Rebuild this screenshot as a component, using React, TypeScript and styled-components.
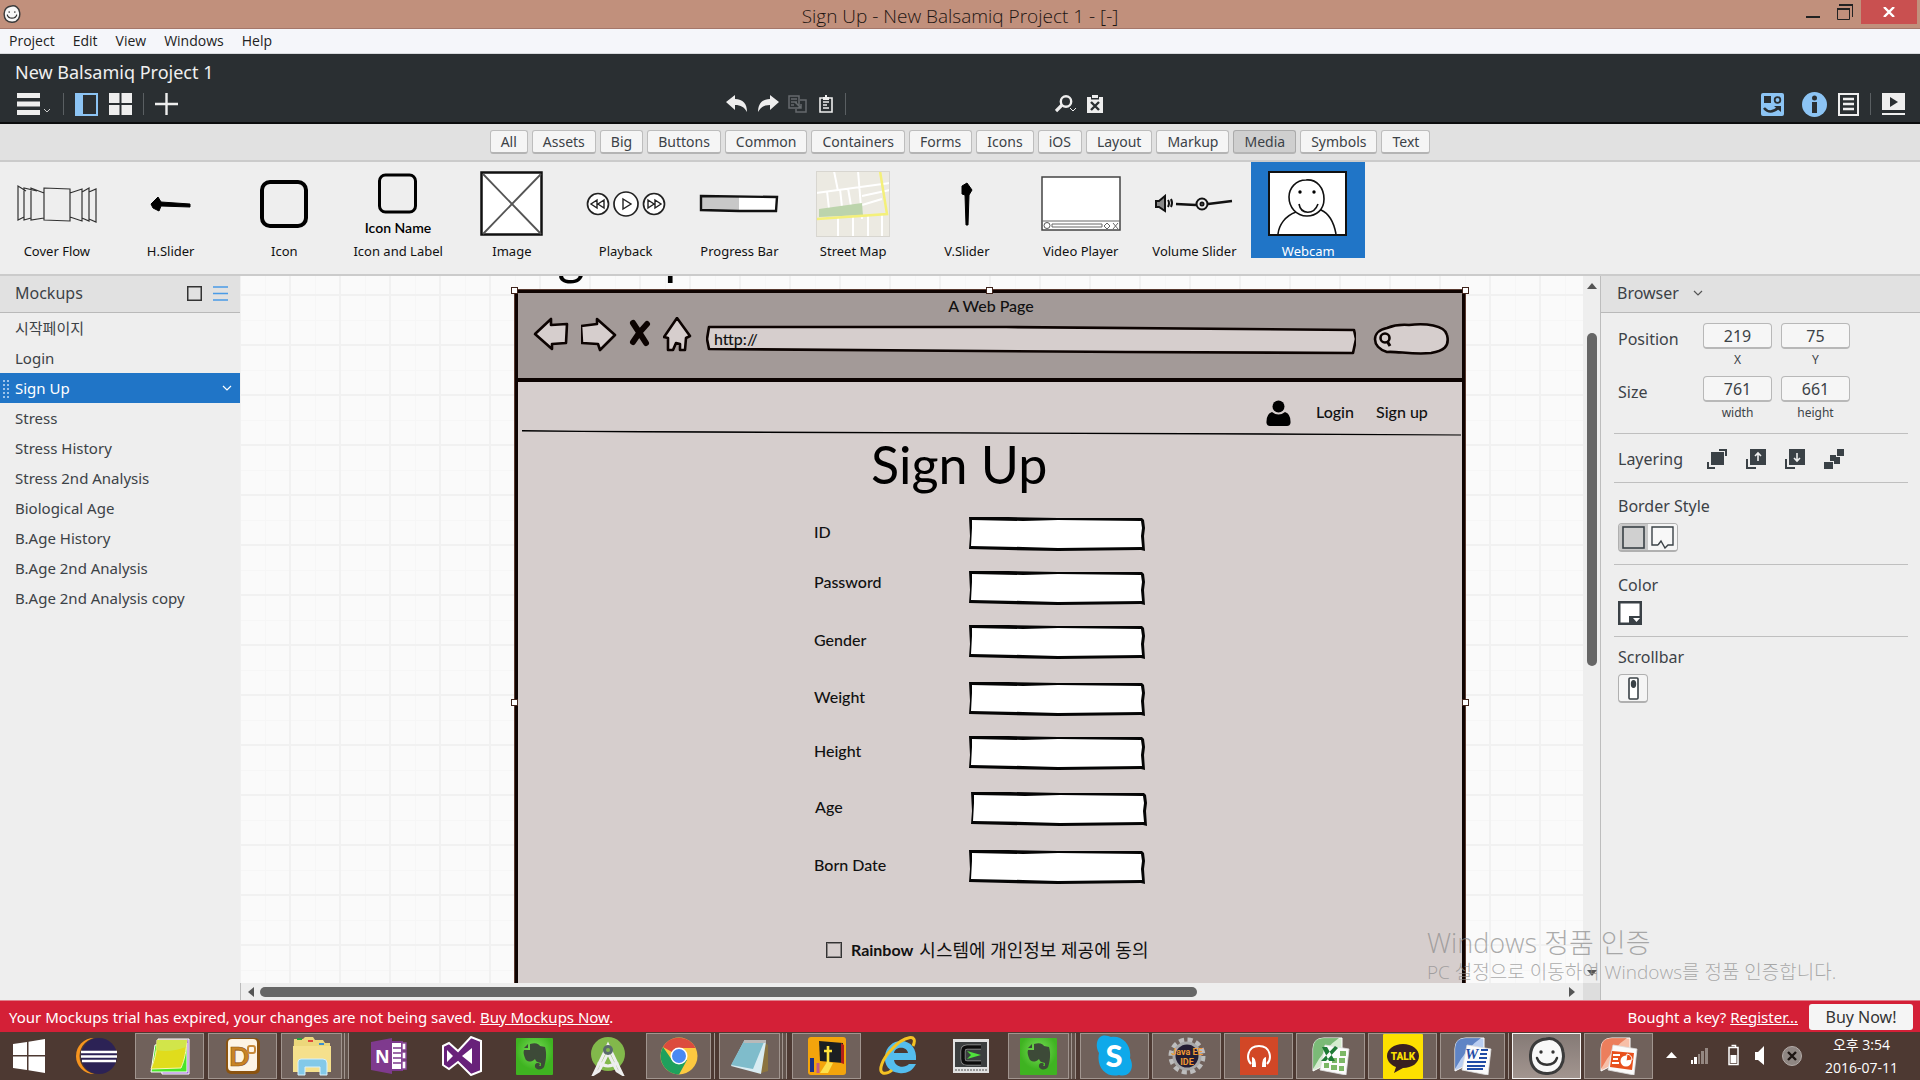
import React from "react";
import styled, { createGlobalStyle, css } from "styled-components";

const ui = `"Noto Sans", "Noto Sans CJK KR", sans-serif`;
const sketch = `Lato, "Noto Sans CJK KR", sans-serif`;
const system = `"Open Sans", "Noto Sans CJK KR", sans-serif`;

const Global = createGlobalStyle`
  * { box-sizing: border-box; }
  body { margin: 0; font-family: ${ui}; color: #3c4247; background: #eee; }
  button, input { font: inherit; color: inherit; margin: 0; padding: 0; border: 0; background: none; }
  svg { display: block; }
  a { color: inherit; }
  ul { list-style: none; margin: 0; padding: 0; }
  h1, h2, p { margin: 0; font-weight: 400; }
`;

const Shell = styled.div`
  display: flex;
  flex-direction: column;
  height: 100vh;
  overflow: hidden;
`;

/* ---------- window frame ---------- */
const TitleBar = styled.header`
  display: grid;
  grid-template-columns: 1fr auto 1fr;
  height: 29px;
  flex: none;
  background: #c1907c;
  border-bottom: 1px solid #a5776a;
`;
const AppMark = styled.div`
  padding: 5px 3px;
`;
const WindowTitle = styled.h1`
  font: 300 19px/32px ${system};
  color: #1d1512;
`;
const WindowButtons = styled.div`
  display: flex;
  justify-content: flex-end;
  align-items: flex-start;
  padding-right: 3px;
`;
const WindowButton = styled.button<{ $close?: boolean }>`
  display: flex;
  justify-content: center;
  align-items: center;
  width: ${(p) => (p.$close ? 56 : 32)}px;
  height: 24px;
  background: ${(p) => (p.$close ? "#c95050" : "transparent")};
`;
const MenuBar = styled.nav`
  display: flex;
  gap: 18px;
  flex: none;
  height: 25px;
  padding: 0 9px;
  background: #f5f6fa;
  border-bottom: 1px solid #d8dade;
`;
const MenuItem = styled.button`
  font: 14px/24px ${system};
  color: #222;
`;

/* ---------- dark toolbar ---------- */
const Header = styled.div`
  flex: none;
  height: 70px;
  padding-top: 6px;
  background: #2a2f32;
  border-bottom: 2px solid #0b0c0d;
`;
const ProjectName = styled.h2`
  padding-left: 15px;
  font-size: 18px;
  line-height: 24px;
  color: #f0f0f0;
`;
const Tools = styled.div`
  display: grid;
  grid-template-columns: 1fr 480px 1fr;
  height: 40px;
`;
const ToolGroup = styled.div<{ $end?: boolean; $gap?: number }>`
  display: flex;
  align-items: center;
  justify-content: ${(p) => (p.$end ? "flex-end" : "flex-start")};
  gap: ${(p) => p.$gap ?? 10}px;
`;
const ToolGroupLeft = styled(ToolGroup)`
  padding-left: 17px;
`;
const ToolGroupRight = styled(ToolGroup)`
  padding-right: 15px;
`;
const CenterTools = styled.div`
  display: flex;
  gap: 209px;
  padding-left: 6px;
`;
const ToolButton = styled.button`
  display: block;
`;
const Separator = styled.span`
  width: 1px;
  height: 22px;
  background: #5a5f62;
`;

/* ---------- component library ---------- */
const CategoryBar = styled.nav`
  display: flex;
  justify-content: center;
  align-items: center;
  gap: 4px;
  flex: none;
  height: 38px;
  background: #e1e1e1;
  border-bottom: 2px solid #cbcbcb;
`;
const Category = styled.button<{ $on?: boolean }>`
  height: 24px;
  padding: 0 10px;
  font-size: 14px;
  line-height: 20px;
  background: ${(p) => (p.$on ? "#cfcfcf" : "#f5f5f5")};
  border: 1px solid ${(p) => (p.$on ? "#aaa" : "#bdbdbd")};
  border-bottom: 2px solid #b4b4b4;
  border-radius: 3px;
`;
const Library = styled.section`
  flex: none;
  height: 114px;
  background: #eee;
  border-bottom: 2px solid #cbcbcb;
`;
const LibraryGrid = styled.div`
  display: grid;
  grid-template-columns: repeat(12, 1fr);
  width: 71.1%;
`;
const LibraryItem = styled.button<{ $on?: boolean }>`
  display: flex;
  flex-direction: column;
  align-items: center;
  height: 96px;
  font-size: 13px;
  line-height: 12px;
  color: ${(p) => (p.$on ? "#fff" : "#111")};
  background: ${(p) => (p.$on ? "#2075c7" : "transparent")};
`;
const Thumb = styled.span`
  display: flex;
  flex: none;
  align-items: center;
  justify-content: center;
  height: 83px;
`;

/* ---------- work area ---------- */
const Work = styled.main`
  display: grid;
  grid-template-columns: 240px 1fr 320px;
  flex: 1;
  min-height: 0;
`;
const Side = styled.aside`
  background: #eee;
  min-width: 0;
`;
const SideHead = styled.div`
  display: flex;
  align-items: center;
  height: 37px;
  padding: 0 12px 2px 15px;
  font-size: 16px;
  background: #e1e1e1;
  border-bottom: 1px solid #b9b9b9;
`;
const SideTitle = styled.h2`
  flex: 1;
  font-size: 16px;
  line-height: 24px;
`;
const ViewButton = styled.button`
  margin-left: 11px;
`;
const Row = styled.button<{ $on?: boolean }>`
  position: relative;
  display: flex;
  align-items: center;
  justify-content: space-between;
  width: 100%;
  height: 30px;
  padding: 0 8px 0 15px;
  font-size: 15px;
  line-height: 20px;
  text-align: left;
  color: ${(p) => (p.$on ? "#fff" : "#3c4247")};
  background: ${(p) => (p.$on ? "#2075c7" : "transparent")};
`;
const Grip = styled.span`
  position: absolute;
  left: 3px;
  top: 7px;
  width: 6px;
  height: 18px;
  background: radial-gradient(circle at 1px 1px, #9cc3ea 1px, transparent 1px) 0 0 / 4px 4px;
`;
const Stage = styled.div`
  display: grid;
  grid-template-columns: 1fr 17px;
  grid-template-rows: 1fr 17px;
  min-width: 0;
  min-height: 0;
`;
const VScroll = styled.div`
  display: flex;
  flex-direction: column;
  align-items: center;
  justify-content: space-between;
  padding: 7px 0;
  background: #eee;
`;
const VTrack = styled.div`
  flex: 1;
  padding: 44px 0 304px;
  display: flex;
`;
const HScroll = styled.div`
  display: flex;
  align-items: center;
  padding: 0 8px 0 7px;
  background: #eee;
  border-left: 1px solid #bbb;
`;
const HTrack = styled.div`
  flex: 1;
  padding: 0 28% 0 6px;
`;
const VThumb = styled.div`
  width: 10px;
  border-radius: 5px;
  background: #666;
`;
const HThumb = styled.div`
  height: 10px;
  border-radius: 5px;
  background: #666;
`;
const Corner = styled.div`
  background: #ddd;
`;

/* ---------- free canvas ---------- */
const Canvas = styled.div`
  position: relative;
  overflow: hidden;
  background-color: #fafafa;
  background-image: linear-gradient(#f1f1f1 2px, transparent 2px),
    linear-gradient(90deg, #f1f1f1 2px, transparent 2px), linear-gradient(#f6f6f6 1px, transparent 1px),
    linear-gradient(90deg, #f6f6f6 1px, transparent 1px);
  background-size: 50px 50px, 50px 50px, 50px 50px, 50px 50px;
  background-position: 0 18px, 49px 0, 0 44px, 25px 0;
`;
type Spot = { $x: number; $y: number };
const pin = css<Spot>`
  position: absolute;
  left: ${(p) => p.$x}px;
  top: ${(p) => p.$y}px;
`;
const BigLabel = styled.div<Spot>`
  ${pin}
  font: 400 52px/60px ${sketch};
  color: #000;
  white-space: nowrap;
`;
const Label = styled.label<Spot>`
  ${pin}
  font: 500 16px/20px ${sketch};
  color: #111;
  white-space: nowrap;
`;
const Browser = styled.section<Spot>`
  ${pin}
  width: 952px;
  height: 827px;
  background: #d6cecd;
  border: 4px solid #0f0402;
  outline: 1px solid #5a3a30;
  outline-offset: -1px;
`;
const BrowserHead = styled.div`
  height: 89px;
  padding: 2px 13px 0 15px;
  background: #a39a98;
  border-bottom: 4px solid #0c0301;
`;
const BrowserTitle = styled.p`
  font: 500 16px/22px ${sketch};
  text-align: center;
  color: #111;
`;
const BrowserTools = styled.div`
  display: flex;
  height: 40px;
  gap: 12px;
`;
const Address = styled.div`
  position: relative;
  flex: 1;
  margin: 0 5px 0 2px;
`;
const AddressInput = styled.input`
  position: absolute;
  left: 8px;
  top: 11px;
  width: 95%;
  height: 22px;
  font: 500 16px/22px ${sketch};
  color: #111;
`;
const SearchBox = styled.div`
  position: relative;
`;
const SearchInput = styled.input`
  position: absolute;
  left: 22px;
  top: 12px;
  width: 44px;
  height: 22px;
`;
const Rule = styled.svg<Spot>`
  ${pin}
`;
const Person = styled.svg<Spot>`
  ${pin}
`;
const CanvasLink = styled.a<Spot>`
  ${pin}
  font: 500 16px/20px ${sketch};
  color: #111;
  text-decoration: none;
  white-space: nowrap;
`;
const TextBox = styled.div<Spot>`
  ${pin}
  width: 178px;
  height: 36px;
`;
const TextBoxInput = styled.input`
  position: absolute;
  inset: 5px;
  width: 166px;
  font: 400 16px/22px ${sketch};
`;
const Consent = styled.label<Spot>`
  ${pin}
  display: flex;
  align-items: center;
  gap: 9px;
  font: 400 16px/20px ${sketch};
  color: #111;
  white-space: nowrap;
`;
const Check = styled.input`
  appearance: none;
  width: 16px;
  height: 16px;
  border: 1px solid #333;
  box-shadow: inset 0 0 0 1px #8a8584;
`;
const ConsentText = styled.span`
  display: flex;
  gap: 6px;
  font-size: 18px;
`;
const ConsentBrand = styled.b`
  font-size: 16px;
`;
const Handle = styled.span<Spot>`
  ${pin}
  width: 7px;
  height: 7px;
  background: #fff;
  border: 1px solid #40241c;
`;

/* ---------- inspector ---------- */
const Inspector = styled(Side)`
  border-left: 1px solid #bdbdbd;
`;
const InspectorHead = styled(SideHead)`
  gap: 14px;
  padding-left: 16px;
`;
const Section = styled.div<{ $pad: string }>`
  margin: 0 12px 0 13px;
  padding: ${(p) => p.$pad};
  font-size: 16px;
  line-height: 20px;
  border-bottom: 1px solid #bfbfbf;
  &:last-child { border-bottom: 0; }
`;
const Prop = styled.div`
  display: grid;
  grid-template-columns: 85px 156px;
  height: 53px;
`;
const PropName = styled.span`
  padding-top: 6px;
`;
const NumberField = styled.label`
  display: flex;
  flex-direction: column;
  align-items: center;
  width: 78px;
  padding-right: 9px;
  font-size: 12px;
  line-height: 22px;
`;
const Fields = styled.div`
  display: flex;
`;
const NumberInput = styled.input`
  width: 69px;
  height: 26px;
  text-align: center;
  font-size: 16px;
  line-height: 22px;
  background: #f6f6f6;
  border: 1px solid #b8b8b8;
  border-bottom-width: 2px;
  border-radius: 4px;
`;
const Layering = styled.div`
  display: flex;
  align-items: center;
  height: 20px;
`;
const LayerName = styled.span`
  width: 89px;
`;
const LayerIcons = styled.div`
  display: flex;
  gap: 19px;
`;
const Toggle = styled.div`
  display: flex;
  width: 60px;
  margin-top: 7px;
  border: 1px solid #b0b0b0;
  border-bottom-width: 2px;
  border-radius: 4px;
  overflow: hidden;
`;
const ToggleButton = styled.button<{ $on?: boolean }>`
  display: flex;
  align-items: center;
  justify-content: center;
  width: 29px;
  height: 26px;
  background: ${(p) => (p.$on ? "#c8c8c8" : "#f5f5f5")};
`;
const Swatch = styled.button`
  display: block;
  margin-top: 6px;
`;
const IconBox = styled.button`
  display: flex;
  align-items: center;
  justify-content: center;
  width: 30px;
  height: 29px;
  margin-top: 7px;
  background: #f5f5f5;
  border: 1px solid #b0b0b0;
  border-bottom-width: 2px;
  border-radius: 4px;
`;

/* ---------- trial notice ---------- */
const Notice = styled.div`
  display: flex;
  align-items: center;
  justify-content: space-between;
  flex: none;
  height: 32px;
  padding: 0 7px 0 9px;
  font-size: 15px;
  line-height: 20px;
  color: #fff;
  background: #d42037;
  border-top: 1px solid #e0808c;
`;
const NoticeEnd = styled.div`
  display: flex;
  align-items: center;
  gap: 11px;
`;
const BuyButton = styled.button`
  width: 104px;
  height: 26px;
  font-size: 16px;
  line-height: 24px;
  color: #333;
  background: #f5f5f5;
  border-radius: 3px;
`;

/* ---------- taskbar ---------- */
const TaskBar = styled.footer`
  display: flex;
  flex: none;
  height: 48px;
  background: #4d3932;
`;
const StartButton = styled.button`
  width: 58px;
  display: flex;
  justify-content: center;
  align-items: center;
`;
const Pinned = styled.button`
  width: 77px;
  display: flex;
  justify-content: center;
  align-items: center;
`;
const TaskGroup = styled.div<{ $gap: number }>`
  display: flex;
  gap: ${(p) => p.$gap}px;
  padding: 1px 3px 1px 0;
`;
const Task = styled.button<{ $state: string; $stack: number }>`
  display: flex;
  justify-content: center;
  align-items: center;
  width: ${(p) => 69 - p.$stack * 4}px;
  margin-right: ${(p) => p.$stack * 4}px;
  border: 1px solid transparent;
  ${(p) => p.$state === "open" && css`background: #70615b; border-color: #a1958f;`}
  ${(p) => p.$state === "active" && css`background: linear-gradient(#857a76, #a2958f); border-color: #f4f2f1;`}
  ${(p) => p.$stack === 1 && css`box-shadow: 3px 0 0 #4d3932, 4px 0 0 #a1958f;`}
  ${(p) => p.$stack === 2 && css`box-shadow: 2px 0 0 #62534c, 3px 0 0 #a1958f, 6px 0 0 #62534c, 7px 0 0 #a1958f;`}
`;
const Tray = styled.div`
  display: flex;
  align-items: center;
  margin-left: auto;
  padding-right: 22px;
`;
const Clock = styled.div`
  font: 400 14px/23px ${system};
  text-align: center;
  color: #fff;
  margin-left: 19px;
`;
const Activation = styled.div`
  position: absolute;
  left: 1427px;
  bottom: 95px;
  color: rgba(140, 140, 140, 0.72);
  font-family: ${system};
  font-weight: 300;
  white-space: nowrap;
  pointer-events: none;
`;
const ActivationTitle = styled.p`
  font-size: 27px;
  line-height: 32px;
  font-weight: 300;
`;
const ActivationText = styled.p`
  font-size: 19px;
  line-height: 26px;
  font-weight: 300;
`;

/* ---------- drawings ---------- */
const Smiley = ({ size }: { size: number }) => (
  <svg width={size} height={size} viewBox="0 0 38 38">
    <path d="M18 2C26 0 34 6 35 15C37 25 32 36 20 36.500C8 37 2 29 2.500 18C3 9 8 3 18 2Z" fill="#f8f8f8" stroke="#3b3b3b" strokeWidth="3" />
    <circle cx="13" cy="15" r="1.700" fill="#333" /><circle cx="25" cy="15" r="1.700" fill="#333" />
    <path d="M9 21C12 30 26 30 29 21" fill="none" stroke="#333" strokeWidth="2.400" strokeLinecap="round" />
  </svg>
);
const Chevron = ({ color }: { color: string }) => (
  <svg width="10" height="8" viewBox="0 0 10 8"><path d="M1 2L5 6L9 2" fill="none" stroke={color} strokeWidth="1.200" /></svg>
);

const ink = { fill: "none", stroke: "#111", strokeWidth: 1.2 };
const thumbs: [string, React.ReactNode][] = [
  ["Cover Flow", <svg width="80" height="40" viewBox="0 0 80 40"><g {...ink} stroke="#333">
    <path d="M27 4L53 5V37L27 36ZM27 9L14 4V36L27 34M20 7L7 4V36L14 34M9 7L1 2V36L7 33M53 9L65 5V37L53 33M65 8L72 4V37L65 34M72 8L79 5V38L72 35" /></g></svg>],
  ["H.Slider", <svg width="42" height="16" viewBox="0 0 42 16"><path d="M1 8L8 1L11 6L40 8V11L11 10L9 15L3 12Z" stroke="#000" /></svg>],
  ["Icon", <svg width="48" height="48" viewBox="0 0 48 48"><rect x="2" y="2" width="44" height="44" rx="8" fill="none" stroke="#000" strokeWidth="4" /></svg>],
  ["Icon and Label", <svg width="68" height="62" viewBox="0 0 68 62"><rect x="15.500" y="2" width="36" height="37" rx="6" fill="none" stroke="#000" strokeWidth="3" /><text x="34" y="60" textAnchor="middle" fontFamily="Lato, sans-serif" fontWeight="600" fontSize="14">Icon Name</text></svg>],
  ["Image", <svg width="64" height="66" viewBox="0 0 64 66"><rect x="1.500" y="1.500" width="60" height="62" fill="#fff" stroke="#111" strokeWidth="2.500" /><path d="M3 3L61 63M61 3L3 63" stroke="#555" strokeWidth="1.800" /></svg>],
  ["Playback", <svg width="80" height="28" viewBox="0 0 80 28"><g fill="#fff" stroke="#222" strokeWidth="1.700"><circle cx="12" cy="14" r="10.500" /><circle cx="40" cy="14" r="12" /><circle cx="68" cy="14" r="10.500" /><path d="M11 10V18L5 14ZM18 10V18L12 14ZM37 9V19L45 14ZM62 10V18L68 14ZM69 10V18L75 14Z" strokeWidth="1.400" /></g></svg>],
  ["Progress Bar", <svg width="80" height="20" viewBox="0 0 80 20"><rect x="2" y="3" width="76" height="13" fill="#fff" /><rect x="2" y="3" width="38" height="13" fill="#c8c8c8" /><path d="M2 2L78 3L77 17L40 17L2 16Z" fill="none" stroke="#111" strokeWidth="2.400" /></svg>],
  ["Street Map", <svg width="74" height="66" viewBox="0 0 74 66"><rect width="74" height="66" fill="#eceae2" /><g stroke="#fff" strokeWidth="2" fill="none"><path d="M0 22L74 12M18 0L22 20M42 0L46 48M11 20L13 38M24 18L26 36M32 17L35 35M46 25L74 19M46 34L66 28M22 46V66M37 46V66M52 44V66M66 43V66" /></g><path d="M3 38L46 32L47 44L3 46Z" fill="#bcd4ac" /><path d="M64 0L71 43L1 48" fill="none" stroke="#f4f07a" strokeWidth="2.500" /><rect x=".5" y=".5" width="73" height="65" fill="none" stroke="#d8d6d0" /></svg>],
  ["V.Slider", <svg width="14" height="44" viewBox="0 0 14 44"><path d="M7 1L12 8L9 13L8 43H6L5 13L2 12L2 4Z" stroke="#000" /></svg>],
  ["Video Player", <svg width="80" height="56" viewBox="0 0 80 56"><rect x="1" y="1" width="78" height="53" fill="#fff" stroke="#444" strokeWidth="1.500" /><path d="M1 45H79M11 48H61V51H11ZM66 47L69 50L66 53L63 50ZM72 47L77 53M77 47L72 53" fill="none" stroke="#666" /><circle cx="6" cy="49.500" r="3" fill="none" stroke="#555" /></svg>],
  ["Volume Slider", <svg width="80" height="20" viewBox="0 0 80 20"><g {...ink} strokeWidth="2"><path d="M2 7H5L11 2V17L5 13H2Z" fill="#888" /><path d="M14 6Q16 9 14 13M17 5Q19 9 17 13" /><path d="M22 10L42 11M54 10L78 7" strokeWidth="2.600" /><circle cx="48" cy="10" r="5.500" /><circle cx="48" cy="10" r="1.500" /></g></svg>],
  ["Webcam", <svg width="80" height="66" viewBox="0 0 80 66"><rect x="1" y="1" width="77" height="63" fill="#fff" stroke="#111" strokeWidth="2" /><g {...ink} strokeWidth="1.600"><path d="M38 9C49 8 56 17 56 28C56 39 48 45 39 45C28 45 21 36 21 26C21 17 28 9 38 9ZM31 33C33 44 46 44 50 33M28 41C17 45 11 54 10 63M53 39C62 43 66 52 68 63" /></g><circle cx="32" cy="21" r="1.700" /><circle cx="46" cy="21" r="1.700" /></svg>],
];

const TextBoxArt = () => (
  <svg width="178" height="36" viewBox="0 0 178 36">
    <path d="M2 2L60 3L174 3L176 12L174 20L175 33L2 33Z" fill="#fff" />
    <path d="M1 1L40 1L90 2L174 2L176 4L177 12L176 20L177 35L173 34L90 35L40 34L1 33L2 20ZM4 4L4 12L3 30L55 31L90 32L174 31L173 20L174 12L173 5L90 4L55 5Z" fillRule="evenodd" fill="#050505" />
  </svg>
);

const Layer = ({ kind }: { kind: number }) => (
  <svg width="20" height="20" viewBox="0 0 20 20" fill="#3a4146">
    {kind === 0 && <path d="M4 3H17V16H4ZM12 0H20V7H18V2H12ZM0 13H2V18H8V20H0Z" />}
    {(kind === 1 || kind === 2) && <path d="M4 0H20V16H4ZM0 10H2V18H10V20H0Z" />}
    {kind === 1 && <path d="M12 12V5M9 7L12 4L15 7" fill="none" stroke="#eee" strokeWidth="1.600" />}
    {kind === 2 && <path d="M12 4V11M9 9L12 12L15 9" fill="none" stroke="#eee" strokeWidth="1.600" />}
    {kind === 3 && <path d="M13 0H20V7H13ZM6 6H12V8H16V15H10V12H6ZM0 13H9V20H0Z" />}
  </svg>
);

/* ---------- taskbar drawings ---------- */
const Evernote = () => (
  <svg width="37" height="37" viewBox="0 0 37 37"><defs><radialGradient id="ev" cy=".35"><stop offset="0" stopColor="#7be05a" /><stop offset="1" stopColor="#3fb321" /></radialGradient></defs><rect width="37" height="37" rx="1" fill="url(#ev)" /><path d="M8 12H14V6C20 4 23 6 24 8L29 9C31 15 30 24 28 29C26 33 18 32 19 27C20 24 23 25 24 26L23 28L25 28V25C20 24 20 23 19 21C15 25 10 24 9 20C8 17 7 15 8 12ZM8 10L12 6V10Z" fill="#3d4a38" /></svg>
);
const Office = ({ tint, dark, children }: { tint: string; dark: string; children: React.ReactNode }) => (
  <svg width="40" height="38" viewBox="0 0 40 38"><path d="M2 34V12Q2 1 13 1H31V14L10 30Z" fill={tint} stroke="#fff" strokeWidth="1" /><path d="M2 32V12Q2 1 13 1H28Q14 10 2 32Z" fill={dark} opacity=".6" /><path d="M14 8L38 12L35 38L9 33Z" fill="#fbfbfb" stroke="#ddd" strokeWidth=".8" />{children}</svg>
);
const art: Record<string, React.ReactNode> = {
  Notes: <svg width="40" height="38" viewBox="0 0 40 38"><path d="M8 2H39V37H12Z" fill="#9c63d6" stroke="#fff" /><path d="M5 8L37 6V35L1 35Z" fill="#4be52a" stroke="#fff" /><path d="M7 3H37C36 14 35 22 31 31L1 32C5 22 7 12 7 3Z" fill="#e0dc1c" stroke="#f8f6b0" /><path d="M7 3H37L36 10Q20 16 6 13Z" fill="#d2e54a" /></svg>,
  Dictionary: <svg width="36" height="38" viewBox="0 0 36 38"><rect x="1" y="1" width="34" height="36" rx="5" fill="#8a5310" /><rect x="3" y="2" width="29" height="32" rx="4" fill="#fdf4e4" /><text x="4" y="29" fontFamily="Lato, sans-serif" fontWeight="900" fontSize="27" fill="#c98424" stroke="#8a5310" strokeWidth=".6">D</text><rect x="23" y="9" width="7" height="7" rx="2" fill="none" stroke="#c98a38" strokeWidth="2" /></svg>,
  Explorer: <svg width="40" height="40" viewBox="0 0 40 40"><path d="M2 3H11L13 1H21L23 4H31L33 7H38V34H1Z" fill="#ecd77b" /><path d="M5 3H10" stroke="#2b9e3f" strokeWidth="2" /><path d="M16 5H21" stroke="#e0483a" strokeWidth="2" /><path d="M27 8H32" stroke="#3a8fd0" strokeWidth="2" /><path d="M1 10H39V36H1Z" fill="#f5e08c" /><path d="M6 39V26Q6 23 9 23H31Q35 23 35 27V39H28V31H13V39Z" fill="#83c9e8" stroke="#d8f0fa" /></svg>,
  OneNote: <svg width="36" height="36" viewBox="0 0 36 36"><path d="M20 4H31V32H20Z" fill="#fff" stroke="#7c3a8c" strokeWidth="2" /><path d="M22 10H30M22 15H30M22 20H30M22 25H30" stroke="#7c3a8c" strokeWidth="1.600" /><path d="M31 5H35V12H31ZM31 14H35V21H31ZM31 23H35V31H31Z" fill="#fff" stroke="#8a4a9a" strokeWidth="1.400" /><path d="M0 4L21 0V36L0 32Z" fill="#7f3a8e" /><text x="4" y="25" fontFamily="Open Sans, sans-serif" fontWeight="700" fontSize="18" fill="#fff">N</text></svg>,
  VisualStudio: <svg width="42" height="40" viewBox="0 0 42 40"><path d="M2 10L8 7L17 15L30 1L40 5V35L30 39L17 26L8 33L2 29Z" fill="#68217a" stroke="#fff" strokeWidth="2" /><path d="M6 14L12 20L6 26ZM31 12V28L21 20Z" fill="#fff" /></svg>,
  Evernote: <Evernote />,
  AndroidStudio: <svg width="36" height="40" viewBox="0 0 36 40"><circle cx="18" cy="18" r="17" fill="#82b84b" /><path d="M18 9L4 38L9 35L18 17L27 35L32 38ZM8 26Q18 34 28 26" fill="none" stroke="#eee" strokeWidth="3" /><circle cx="18" cy="14" r="5" fill="#5a6a6c" /><circle cx="18" cy="14" r="2" fill="#82b84b" /></svg>,
  Chrome: <svg width="38" height="38" viewBox="0 0 38 38"><circle cx="19" cy="19" r="18.500" fill="#fdc940" /><path d="M19 19L3 10A18.500 18.500 0 0 1 35.500 11H19Z" fill="#dc4b3e" /><path d="M3 10A18.500 18.500 0 0 0 19 37.500L27 23L12 23Z" fill="#1fa15d" /><circle cx="19" cy="19" r="8.500" fill="#fff" /><circle cx="19" cy="19" r="7" fill="#4a89f3" /></svg>,
  Notepad: <svg width="40" height="38" viewBox="0 0 40 38"><path d="M32 4L38 8V34L28 37Z" fill="#8a7340" /><path d="M14 4L36 5L31 37L1 29Z" fill="#d9ecf2" /><path d="M14 4L34 5L23 32L1 28Z" fill="#7fbccb" /><path d="M14 3H36V6H14Z" fill="#b9b9b9" /></svg>,
  Bible: <svg width="38" height="38" viewBox="0 0 38 38"><rect width="38" height="38" rx="3" fill="#f3a40c" /><path d="M11 4L35 6V26L12 24Z" fill="#1c1f22" /><path d="M33 6L36 8V27L33 26Z" fill="#b3201a" /><path d="M20 9V27M16 14H24" stroke="#ffe23c" strokeWidth="2.600" /><path d="M19 25L25 26L20 36H12Z" fill="#fbe04e" /><path d="M4 21V35" stroke="#1d3184" strokeWidth="4" /><path d="M10 26V36" stroke="#c05a8a" strokeWidth="3" /></svg>,
  InternetExplorer: <svg width="40" height="40" viewBox="0 0 40 40"><path d="M37 24H15C16 31 25 33 30 28H37C33 36 26 38 20 37C10 36 5 29 6 20C7 11 14 5 22 5C32 5 38 13 37 24ZM15 17H29C28 10 16 10 15 17Z" fill="#54bdee" /><path d="M34 10C40 -3 25 0 13 13C3 23 -1 35 4 37C7 38 11 36 13 34" fill="none" stroke="#f4c223" strokeWidth="3" /></svg>,
  Terminal: <svg width="36" height="34" viewBox="0 0 36 34"><rect width="36" height="34" fill="#e2e2e2" /><rect x="2" y="3" width="32" height="25" fill="#3b3e3f" /><path d="M28 8H14Q10 8 10 12V20Q10 24 14 24H28" fill="none" stroke="#999" strokeWidth="5" /><path d="M28 8H14Q10 8 10 12V20Q10 24 14 24H28" fill="none" stroke="#0c0c0c" strokeWidth="3.600" /><path d="M14 12L28 16L14 20L18 16Z" fill="#4fe03c" /><path d="M2 31H34" stroke="#999" strokeWidth="2" strokeDasharray="2 1" /></svg>,
  Evernote2: <Evernote />,
  Skype: <svg width="37" height="42" viewBox="0 0 37 42"><path d="M3 3C7 -1 12 1 15 2C26 0 36 10 34 23C39 32 34 43 23 40C11 43 0 33 3 18C0 13 0 7 3 3Z" fill="#0fa9ea" /><text x="18" y="32" textAnchor="middle" fontFamily="Lato, sans-serif" fontWeight="900" fontSize="31" fill="#fff">S</text></svg>,
  JavaEE: <svg width="38" height="38" viewBox="0 0 38 38"><circle cx="19" cy="19" r="16" fill="none" stroke="#bdbdbd" strokeWidth="5" strokeDasharray="5 3.380" /><circle cx="19" cy="19" r="14.500" fill="#a8a8a8" /><circle cx="19" cy="19" r="11.500" fill="#241d33" /><text x="19" y="18" textAnchor="middle" fontFamily="Roboto, sans-serif" fontWeight="700" fontSize="9" fill="#f09a34">Java EE</text><text x="19" y="28" textAnchor="middle" fontFamily="Roboto, sans-serif" fontWeight="700" fontSize="9" fill="#f09a34">IDE</text></svg>,
  Music: <svg width="38" height="38" viewBox="0 0 38 38"><rect width="38" height="38" fill="#d24726" /><path d="M11 27C6 22 7 9 19 9C31 9 32 22 27 27" fill="none" stroke="#fff" strokeWidth="2" /><path d="M12 20Q16 20 16 30H12ZM26 20Q22 20 22 30H26Z" fill="#fff" /></svg>,
  Excel: <Office tint="#d5ecd0" dark="#3f9a3c"><path d="M29 14H35V19H29ZM28 21H34V26H28ZM21 21H26V26H21ZM13 26H18V31H13ZM20 28H26V33H20ZM28 29H33V34H28Z" fill="#7cb866" /><path d="M11 10H16L24 24H18ZM24 9L10 24H15L27 11Z" fill="#1f7a35" /></Office>,
  Talk: <svg width="40" height="45" viewBox="0 0 40 45"><rect width="40" height="45" rx="1" fill="#fde000" /><path d="M20 10C29 10 36 15 36 22C36 29 29 34 20 34L11 39L13 33C8 31 4 27 4 22C4 15 11 10 20 10Z" fill="#3a2020" /><text x="20" y="26" textAnchor="middle" fontFamily="Roboto, sans-serif" fontWeight="900" fontSize="10" fill="#fde000">TALK</text></svg>,
  Word: <Office tint="#b9cdf0" dark="#2353a8"><path d="M28 13H35M27 17H34M26 21H34M14 25H33M14 29H32M14 32H30" stroke="#1f4ba5" strokeWidth="2" /><text x="12" y="22" fontFamily="Liberation Serif, serif" fontWeight="700" fontStyle="italic" fontSize="15" fill="#1f4ba5">W</text></Office>,
  Mockups: <Smiley size={38} />,
  PowerPoint: <Office tint="#f7bfa8" dark="#e4532a"><path d="M13 14L35 16L33 33L11 30Z" fill="#e8501c" /><path d="M14 18H21M14 22H19M13 26H20" stroke="#fff" strokeWidth="2.200" /><circle cx="27" cy="24" r="5.500" fill="#fff" /><path d="M27 24L28 17Q33 18 33 23Z" fill="#e8501c" stroke="#fff" /></Office>,
};
type TaskInfo = [string, string, number];
const firstTasks: TaskInfo[] = [
  ["Notes", "open", 0], ["Dictionary", "open", 0], ["Explorer", "open", 2], ["OneNote", "idle", 0], ["VisualStudio", "idle", 0],
  ["Evernote", "idle", 0], ["AndroidStudio", "idle", 0], ["Chrome", "open", 1], ["Notepad", "open", 2], ["Bible", "open", 0],
];
const moreTasks: TaskInfo[] = [
  ["InternetExplorer", "idle", 0], ["Terminal", "idle", 0], ["Evernote2", "open", 2], ["Skype", "open", 0], ["JavaEE", "open", 0],
  ["Music", "open", 0], ["Excel", "open", 0], ["Talk", "open", 0], ["Word", "open", 1], ["Mockups", "active", 0], ["PowerPoint", "open", 0],
];
const TaskList = ({ items, gap }: { items: TaskInfo[]; gap: number }) => (
  <TaskGroup $gap={gap}>
    {items.map(([name, state, stack]) => (
      <Task key={name} $state={state} $stack={stack} aria-label={name}>{art[name]}</Task>
    ))}
  </TaskGroup>
);

/* ---------- data ---------- */
const categories = ["All", "Assets", "Big", "Buttons", "Common", "Containers", "Forms", "Icons", "iOS", "Layout", "Markup", "Media", "Symbols", "Text"];
const mockups = ["시작페이지", "Login", "Sign Up", "Stress", "Stress History", "Stress 2nd Analysis", "Biological Age", "B.Age History", "B.Age 2nd Analysis", "B.Age 2nd Analysis copy"];
const fields = [
  { name: "ID", labelX: 574, labelY: 246, boxX: 728, boxY: 240 },
  { name: "Password", labelX: 574, labelY: 296, boxX: 728, boxY: 294 },
  { name: "Gender", labelX: 574, labelY: 354, boxX: 728, boxY: 348 },
  { name: "Weight", labelX: 574, labelY: 411, boxX: 728, boxY: 405 },
  { name: "Height", labelX: 574, labelY: 465, boxX: 728, boxY: 459 },
  { name: "Age", labelX: 575, labelY: 521, boxX: 730, boxY: 515 },
  { name: "Born Date", labelX: 574, labelY: 579, boxX: 728, boxY: 573 },
];
const handles = [[271, 11], [746, 11], [1222, 11], [271, 423], [1222, 423]];

const outline = { fill: "#d6cecd", stroke: "#0c0301", strokeWidth: 2.6, strokeLinejoin: "round" as const };

export default function App() {
  return (
    <Shell>
      <Global />
      <TitleBar>
        <AppMark><Smiley size={18} /></AppMark>
        <WindowTitle>Sign Up - New Balsamiq Project 1 - [-]</WindowTitle>
        <WindowButtons>
          <WindowButton aria-label="Minimize"><svg width="14" height="16"><path d="M0 13H14" stroke="#222" strokeWidth="2" /></svg></WindowButton>
          <WindowButton aria-label="Restore"><svg width="16" height="16" fill="none" stroke="#222"><path d="M.5 4.500H12.500V15.500H.5ZM2.500 .5H15.500V13" /><path d="M0 5H13M2 1H16" strokeWidth="2" /></svg></WindowButton>
          <WindowButton $close aria-label="Close"><svg width="12" height="10"><path d="M1 0L11 10M11 0L1 10" stroke="#fff" strokeWidth="2.400" /></svg></WindowButton>
        </WindowButtons>
      </TitleBar>
      <MenuBar>
        {["Project", "Edit", "View", "Windows", "Help"].map((m) => <MenuItem key={m}>{m}</MenuItem>)}
      </MenuBar>
      <Header>
        <ProjectName>New Balsamiq Project 1</ProjectName>
        <Tools>
          <ToolGroupLeft $gap={11}>
            <ToolButton aria-label="Menu"><svg width="35" height="24" fill="#eee"><path d="M0 1H23V6H0ZM0 9.500H23V14.500H0ZM0 18H23V23H0Z" /><path d="M27 17L30 20L33 17" fill="none" stroke="#ccc" /></svg></ToolButton>
            <Separator />
            <ToolButton aria-label="Navigator"><svg width="23" height="24"><rect y="1" width="23" height="23" fill="#8cc4f4" /><rect x="8" y="3" width="13" height="19" fill="#2a2f32" /></svg></ToolButton>
            <ToolButton aria-label="Grid"><svg width="23" height="24" fill="#eee"><path d="M0 1H10.500V11H0ZM12.500 1H23V11H12.500ZM0 13H10.500V23H0ZM12.500 13H23V23H12.500Z" /></svg></ToolButton>
            <Separator />
            <ToolButton aria-label="New mockup"><svg width="23" height="24"><path d="M11.500 1V23M0 12H23" stroke="#eee" strokeWidth="2.400" /></svg></ToolButton>
          </ToolGroupLeft>
          <CenterTools>
            <ToolGroup $gap={9}>
              <ToolButton aria-label="Undo"><svg width="22" height="18" fill="#eee"><path d="M0 7L9 0V4C17 4 21 9 21 17C18 12 15 10 9 10V15Z" /></svg></ToolButton>
              <ToolButton aria-label="Redo"><svg width="22" height="18" fill="#eee"><path d="M22 7L13 0V4C5 4 1 9 1 17C4 12 7 10 13 10V15Z" /></svg></ToolButton>
              <ToolButton aria-label="Copy"><svg width="19" height="18" fill="none" stroke="#656a6d" strokeWidth="1.500"><path d="M1 1H11V13H1ZM3 4H9M3 7H9M3 10H6M12 5H18V17H8V14M7 7L13 13M13 9V13H9" /></svg></ToolButton>
              <ToolButton aria-label="Paste"><svg width="20" height="18" fill="none" stroke="#eee" strokeWidth="1.600"><path d="M4 3H16V17H4ZM7 7H13M7 10H11M7 13H13" /><path d="M7 3.500H13M9 1H11" strokeWidth="3" /></svg></ToolButton>
              <Separator />
            </ToolGroup>
            <ToolGroup $gap={8}>
              <ToolButton aria-label="Zoom"><svg width="23" height="18" fill="none" stroke="#eee"><circle cx="11" cy="6.500" r="5.200" strokeWidth="2.400" /><path d="M7 10L1 16" strokeWidth="3.200" /><path d="M15 13L18 16L21 13" /></svg></ToolButton>
              <ToolButton aria-label="Clear"><svg width="18" height="18"><path d="M1 2H17V18H1Z" fill="#eee" /><path d="M5 2.500H13" stroke="#2a2f32" strokeWidth="4" /><path d="M6 1.500H12" stroke="#eee" strokeWidth="3" /><path d="M5 7L13 15M13 7L5 15" stroke="#2a2f32" strokeWidth="2.400" /></svg></ToolButton>
            </ToolGroup>
          </CenterTools>
          <ToolGroupRight $end $gap={11}>
            <ToolButton aria-label="UI library"><svg width="30" height="24"><rect y="1" width="23" height="23" rx="2" fill="#8cc4f4" /><path d="M3 4H10V11H3Z" fill="#2a2f32" /><circle cx="16.500" cy="8" r="2.800" fill="none" stroke="#2a2f32" strokeWidth="1.800" /><path d="M3 16Q9 23 17 16" fill="none" stroke="#2a2f32" strokeWidth="2.600" /><path d="M13 14H20V20Z" fill="#2a2f32" /></svg></ToolButton>
            <ToolButton aria-label="Inspector"><svg width="25" height="25"><circle cx="12.500" cy="12.500" r="12.500" fill="#8cc4f4" /><circle cx="12.500" cy="6" r="2.500" fill="#2a2f32" /><path d="M10 10H15V21H10Z" fill="#2a2f32" /></svg></ToolButton>
            <ToolButton aria-label="Notes"><svg width="21" height="24"><rect x="1" y="2" width="19" height="21" fill="none" stroke="#eee" strokeWidth="2" /><path d="M5 7H16M5 12H16M5 17H16" stroke="#eee" strokeWidth="2.600" /></svg></ToolButton>
            <Separator />
            <ToolButton aria-label="Present"><svg width="23" height="24"><path d="M0 1H23V18H0ZM0 21H23V23H0Z" fill="#eee" /><path d="M8 5V15L16 10Z" fill="#2a2f32" /></svg></ToolButton>
          </ToolGroupRight>
        </Tools>
      </Header>
      <CategoryBar>
        {categories.map((c) => <Category key={c} $on={c === "Media"}>{c}</Category>)}
      </CategoryBar>
      <Library>
        <LibraryGrid>
          {thumbs.map(([name, drawing]) => (
            <LibraryItem key={name} $on={name === "Webcam"}><Thumb>{drawing}</Thumb>{name}</LibraryItem>
          ))}
        </LibraryGrid>
      </Library>
      <Work>
        <Side>
          <SideHead>
            <SideTitle>Mockups</SideTitle>
            <ViewButton aria-label="Thumbnails"><svg width="15" height="15"><rect x=".75" y=".75" width="13.500" height="13.500" fill="none" stroke="#333" strokeWidth="1.500" /></svg></ViewButton>
            <ViewButton aria-label="List"><svg width="15" height="15"><path d="M0 1H15M0 7.500H15M0 14H15" stroke="#4a9be6" strokeWidth="1.500" /></svg></ViewButton>
          </SideHead>
          <ul>
            {mockups.map((m) => (
              <li key={m}>
                <Row $on={m === "Sign Up"}>{m === "Sign Up" && <Grip />}{m}{m === "Sign Up" && <Chevron color="#fff" />}</Row>
              </li>
            ))}
          </ul>
        </Side>
        <Stage>
          <Canvas>
            <BigLabel $x={277} $y={-52}>Sign Up</BigLabel>
            <Browser $x={274} $y={13}>
              <BrowserHead>
                <BrowserTitle>A Web Page</BrowserTitle>
                <BrowserTools>
                  <button aria-label="Back"><svg width="36" height="40"><path d="M2 17L18 2V8L34 7L33 26L19 27V32Z" {...outline} /></svg></button>
                  <button aria-label="Forward"><svg width="36" height="40"><path d="M0 9L16 7V2L34 18L19 33L17 27L1 26Z" {...outline} /></svg></button>
                  <button aria-label="Stop"><svg width="22" height="40"><path d="M4 6Q10 15 17 26M18 7Q10 15 4 25" stroke="#0c0301" strokeWidth="6" strokeLinecap="round" fill="none" /></svg></button>
                  <button aria-label="Home"><svg width="29" height="40"><path d="M14 1L27 19L23 21L22 33H17V27L13 26L10 33H5V21L1 20Z" {...outline} /></svg></button>
                  <Address>
                    <svg width="100%" height="40" viewBox="0 0 650 40" preserveAspectRatio="none"><path d="M3 10L300 10L648 13L650 22L647 36L420 35L3 32L1 22Z" {...outline} vectorEffect="non-scaling-stroke" /></svg>
                    <AddressInput aria-label="Address" defaultValue="http://" />
                  </Address>
                  <SearchBox>
                    <svg width="76" height="40"><path d="M36 8C52 6 72 8 74 18C77 30 70 34 58 36C40 38 24 34 14 35C-2 30 -2 14 14 11Q24 7 36 8Z" {...outline} /><circle cx="12" cy="21" r="4.500" fill="none" stroke="#0c0301" strokeWidth="2.600" /><path d="M14 24L17 29" stroke="#0c0301" strokeWidth="3" /></svg>
                    <SearchInput aria-label="Search" />
                  </SearchBox>
                </BrowserTools>
              </BrowserHead>
            </Browser>
            <Rule $x={282} $y={154} width="939" height="6"><path d="M0 1L939 5L780 4L120 2Z" fill="#000" stroke="#000" strokeWidth="1.200" /></Rule>
            <Person $x={1026} $y={124} width="25" height="26"><circle cx="12.500" cy="6.500" r="6" /><path d="M6 12Q12.500 17 19 12Q25 14 24.500 23Q24 26 21 26H4Q1 26 .5 23Q0 14 6 12Z" /></Person>
            <CanvasLink href="#login" $x={1076} $y={126}>Login</CanvasLink>
            <CanvasLink href="#signup" $x={1136} $y={126}>Sign up</CanvasLink>
            <BigLabel $x={631} $y={158}>Sign Up</BigLabel>
            {fields.map((f) => (
              <React.Fragment key={f.name}>
                <Label htmlFor={f.name} $x={f.labelX} $y={f.labelY}>{f.name}</Label>
                <TextBox $x={f.boxX} $y={f.boxY}><TextBoxArt /><TextBoxInput id={f.name} /></TextBox>
              </React.Fragment>
            ))}
            <Consent $x={586} $y={664}>
              <Check type="checkbox" />
              <ConsentText><ConsentBrand>Rainbow</ConsentBrand> 시스템에 개인정보 제공에 동의</ConsentText>
            </Consent>
            {handles.map(([x, y]) => <Handle key={`${x}-${y}`} $x={x} $y={y} />)}
          </Canvas>
          <VScroll>
            <svg width="10" height="6"><path d="M0 6L5 0L10 6Z" fill="#555" /></svg>
            <VTrack><VThumb /></VTrack>
            <svg width="10" height="6"><path d="M0 0L5 6L10 0Z" fill="#555" /></svg>
          </VScroll>
          <HScroll>
            <svg width="6" height="10"><path d="M6 0L0 5L6 10Z" fill="#555" /></svg>
            <HTrack><HThumb /></HTrack>
            <svg width="6" height="10"><path d="M0 0L6 5L0 10Z" fill="#555" /></svg>
          </HScroll>
          <Corner />
        </Stage>
        <Inspector>
          <InspectorHead>Browser<Chevron color="#555" /></InspectorHead>
          <Section $pad="10px 4px 4px">
            <Prop>
              <PropName>Position</PropName>
              <Fields>
                <NumberField><NumberInput defaultValue="219" />X</NumberField>
                <NumberField><NumberInput defaultValue="75" />Y</NumberField>
              </Fields>
            </Prop>
            <Prop>
              <PropName>Size</PropName>
              <Fields>
                <NumberField><NumberInput defaultValue="761" />width</NumberField>
                <NumberField><NumberInput defaultValue="661" />height</NumberField>
              </Fields>
            </Prop>
          </Section>
          <Section $pad="15px 4px 13px">
            <Layering>
              <LayerName>Layering</LayerName>
              <LayerIcons>
                {["Bring to front", "Bring forward", "Send backward", "Send to back"].map((n, i) => (
                  <button key={n} aria-label={n}><Layer kind={i} /></button>
                ))}
              </LayerIcons>
            </Layering>
          </Section>
          <Section $pad="13px 4px 12px">
            Border Style
            <Toggle>
              <ToggleButton $on aria-label="Solid"><svg width="23" height="23"><rect x="1" y="1" width="21" height="21" fill="#d0d0d0" stroke="#3a4146" strokeWidth="1.600" /></svg></ToggleButton>
              <ToggleButton aria-label="Torn"><svg width="23" height="23"><path d="M7 19H1V1H22V19H17L14 22L10 15L7 19" fill="#f8f8f8" stroke="#3a4146" strokeWidth="1.400" /></svg></ToggleButton>
            </Toggle>
          </Section>
          <Section $pad="10px 4px 11px">
            Color
            <Swatch aria-label="Color"><svg width="24" height="24"><rect x="1.250" y="1.250" width="21.500" height="21.500" fill="#fff" stroke="#3a4146" strokeWidth="2.500" /><path d="M11 15H24V24H11Z" fill="#3a4146" /><path d="M15 17H22L18.500 21Z" fill="#fff" /></svg></Swatch>
          </Section>
          <Section $pad="10px 4px 0">
            Scrollbar
            <IconBox aria-label="Scrollbar"><svg width="11" height="23"><rect x="1" y="1" width="9" height="21" rx="1" fill="#fff" stroke="#3a4146" strokeWidth="1.600" /><ellipse cx="5.500" cy="7" rx="2.700" ry="4" fill="#3a4146" /></svg></IconBox>
          </Section>
        </Inspector>
      </Work>
      <Notice>
        <p>Your Mockups trial has expired, your changes are not being saved. <a href="#buy">Buy Mockups Now</a>.</p>
        <NoticeEnd>
          <span>Bought a key? <a href="#register">Register...</a></span>
          <BuyButton>Buy Now!</BuyButton>
        </NoticeEnd>
      </Notice>
      <TaskBar>
        <StartButton aria-label="Start"><svg width="32" height="34" fill="#fff"><path d="M0 5L14 3V16H0ZM15.500 2.800L32 0V16H15.500ZM0 17.500H14V31L0 29ZM15.500 17.500H32V34L15.500 31.200Z" /></svg></StartButton>
        <Pinned aria-label="Eclipse"><svg width="42" height="38"><circle cx="18" cy="19" r="18" fill="#f7941e" /><circle cx="22" cy="19" r="18.500" fill="#4d3932" /><circle cx="23" cy="19" r="18" fill="#2c2255" /><path d="M5 15H41M5 19.500H41M6 24H40" stroke="#fff" strokeWidth="2.400" /></svg></Pinned>
        <TaskList items={firstTasks} gap={4} />
        <TaskList items={moreTasks} gap={3} />
        <Tray>
          <svg width="140" height="24">
            <path d="M0 14H11L5.500 8Z" fill="#fff" />
            <path d="M25 16H27V20H25ZM28 13H31V20H28Z" fill="#fff" /><path d="M32 10H34V20H32ZM35 7H38V20H35ZM39 4H42V20H39Z" fill="#948781" />
            <path d="M63 3.500H72V20.500H63ZM65.500 1.500H69.500V3" fill="none" stroke="#fff" strokeWidth="1.500" /><path d="M64.500 11H70.500V19H64.500Z" fill="#fff" />
            <path d="M89 8H92L98 2V21L92 16H89Z" fill="#fff" />
            <circle cx="126" cy="12" r="9.500" fill="#8f8682" stroke="#b5adaa" /><path d="M122 8L130 16M130 8L122 16" stroke="#1d1512" strokeWidth="2.400" />
          </svg>
          <Clock>오후 3:54<br />2016-07-11</Clock>
        </Tray>
      </TaskBar>
      <Activation>
        <ActivationTitle>Windows 정품 인증</ActivationTitle>
        <ActivationText>PC 설정으로 이동하여 Windows를 정품 인증합니다.</ActivationText>
      </Activation>
    </Shell>
  );
}
